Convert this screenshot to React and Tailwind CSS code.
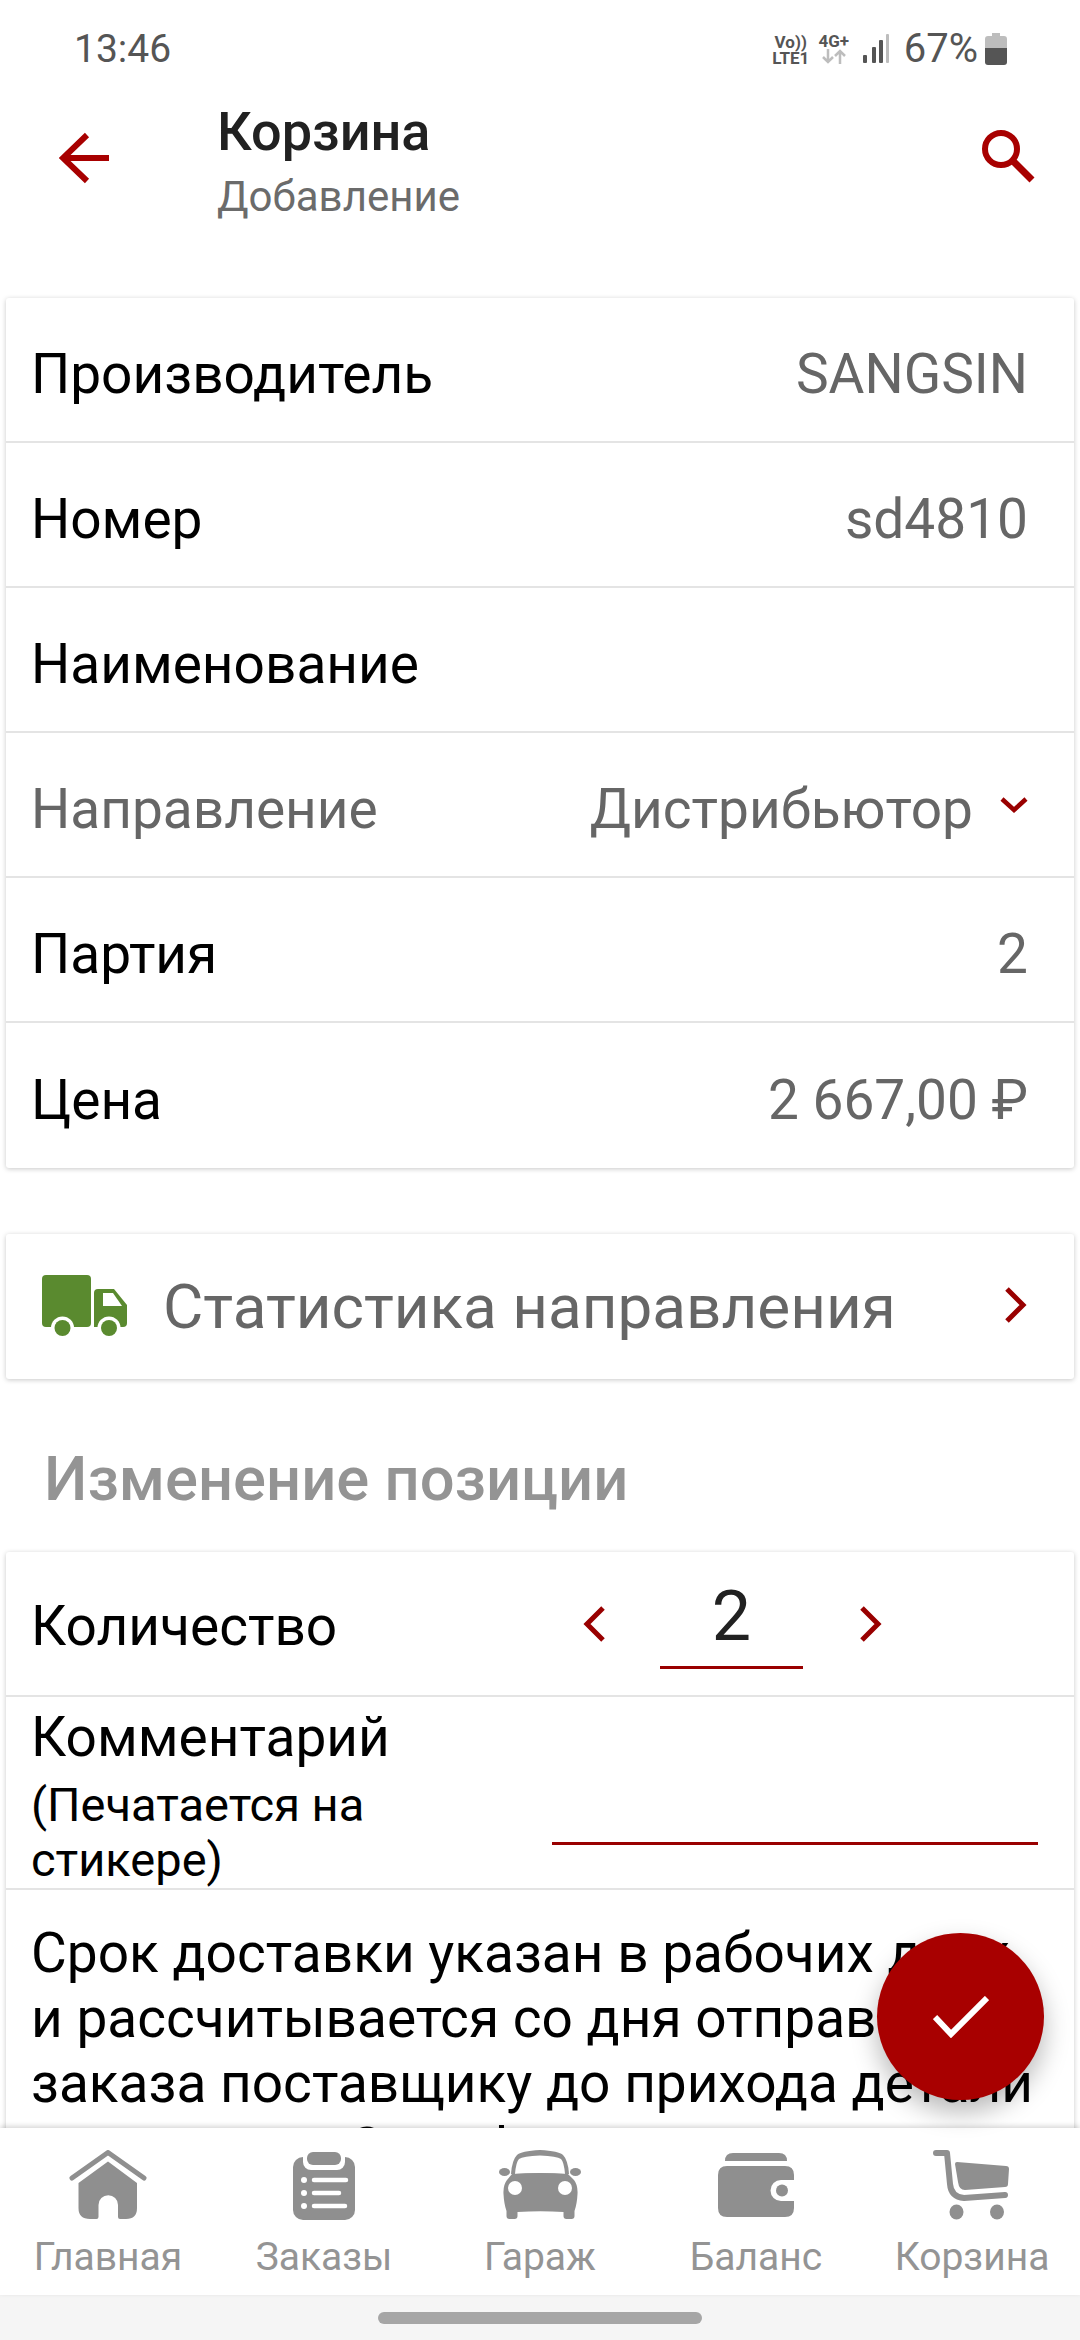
import React from 'react';

const RED = '#a80000';

function StatusBar() {
  return (
    <div className="h-[98px] flex items-center justify-between pl-[74px] pr-[73px] text-[#555555]">
      <span className="text-[39px] leading-none">13:46</span>
      <div className="flex items-center">
        {/* network labels */}
        <div className="flex flex-col items-center w-[40px] font-bold text-[#555555]">
          <span className="text-[17px] leading-[17px]">Vo))</span>
          <span className="text-[17px] leading-[14px]">LTE1</span>
        </div>
        <div className="flex flex-col items-center w-[34px] ml-[6px]">
          <span className="text-[17px] leading-[15px] font-bold">4G+</span>
          <svg width="26" height="15" viewBox="0 0 26 15" fill="none" stroke="#bdbdbd" strokeWidth="2.5">
            <path d="M7 0V13M2 8l5 5 5-5" />
            <path d="M19 15V2M14 7l5-5 5 5" />
          </svg>
        </div>
        <svg className="ml-[11px]" width="28" height="30" viewBox="0 0 28 30">
          <rect x="1" y="21" width="4" height="8" rx="1" fill="#555555" />
          <rect x="10" y="13" width="4" height="16" rx="1" fill="#555555" />
          <rect x="17" y="6" width="4" height="23" rx="1" fill="#555555" />
          <rect x="24" y="0" width="3" height="29" rx="1" fill="#bdbdbd" />
        </svg>
        <span className="text-[40px] leading-none ml-[14px]">67%</span>
        <svg className="ml-[7px]" width="22" height="32" viewBox="0 0 22 32">
          <path d="M7 0h8v3h4q3 0 3 3v9H0V6q0-3 3-3h4z" fill="#bdbdbd" />
          <path d="M0 15h22v14q0 3-3 3H3q-3 0-3-3z" fill="#555555" />
        </svg>
      </div>
    </div>
  );
}

function Header() {
  return (
    <div className="h-[192px] flex items-start">
      <svg className="ml-[59px] mt-[34px] shrink-0" width="52" height="52" viewBox="0 0 52 52" fill="none" stroke={RED} strokeWidth="6">
        <path d="M50 26H5M28 3L4 26l24 23" />
      </svg>
      <div className="ml-[106px] flex-1 pt-[4px]">
        <div className="text-[54px] leading-[60px] font-medium text-[#212121]">Корзина</div>
        <div className="text-[42px] leading-[50px] mt-[10px] text-[#6b6b6b]">Добавление</div>
      </div>
      <svg className="mr-[45px] mt-[31px] shrink-0" width="54" height="54" viewBox="0 0 54 54" fill="none" stroke={RED} strokeWidth="6">
        <circle cx="20" cy="20" r="16" />
        <path d="M31 31l20 20" strokeWidth="7" />
      </svg>
    </div>
  );
}

function Row({ label, value, muted, children }) {
  return (
    <div className="h-[145px] flex items-center justify-between pt-[9px] pl-[25px] pr-[46px] border-b-2 border-[#e4e4e4] last:border-b-0">
      <span className={`text-[55px] ${muted ? 'text-[#666666]' : 'text-black'}`}>{label}</span>
      <div className="flex items-center">
        <span className="text-[55px] text-[#666666]">{value}</span>
        {children}
      </div>
    </div>
  );
}

function Chevron({ dir = 'right', w = 24, h = 36, sw = 5 }) {
  const d = dir === 'right' ? 'M3 2l16 16L3 34' : 'M21 2L5 18l16 16';
  return (
    <svg width={w} height={h} viewBox="0 0 24 36" fill="none" stroke="#990000" strokeWidth={sw} preserveAspectRatio="none">
      <path d={d} />
    </svg>
  );
}

function Truck() {
  return (
    <svg width="110" height="85" viewBox="0 0 110 85" className="shrink-0">
      <rect x="12" y="10" width="49" height="52" rx="4" fill="#5a8a2f" />
      <path d="M64 28q0-4 4-4h16l13 16v18q0 4-4 4H64z" fill="#5a8a2f" />
      <path d="M73 28h10l9 13H73z" fill="#fff" />
      <circle cx="32.5" cy="63" r="11.5" fill="#fff" />
      <circle cx="32.5" cy="63" r="8" fill="#5a8a2f" />
      <circle cx="79" cy="63" r="11.5" fill="#fff" />
      <circle cx="79" cy="63" r="8" fill="#5a8a2f" />
    </svg>
  );
}

function HomeIcon() {
  return (
    <svg width="78" height="70" viewBox="0 0 78 70" fill="#8f8f8f">
      <path d="M3 28L39 2.5 75 28" fill="none" stroke="#8f8f8f" strokeWidth="5" strokeLinecap="round" strokeLinejoin="round" />
      <path d="M39 11.5L68 33v25q0 11-11 11h-6q-2 0-2-2V55a9.7 9.7 0 0 0-19.5 0v12q0 2-2 2H21Q9.5 69 9.5 58V33z" />
    </svg>
  );
}

function OrdersIcon() {
  return (
    <svg width="62" height="68" viewBox="0 0 62 68" fill="#8f8f8f">
      <rect x="0" y="5" width="62" height="63" rx="10" />
      <rect x="10" y="-4" width="42" height="22" rx="8" fill="#fff" />
      <rect x="14" y="0" width="34" height="13" rx="6" />
      <g fill="#fff">
        <circle cx="11" cy="28" r="3" />
        <circle cx="11" cy="41" r="3" />
        <circle cx="11" cy="54" r="3" />
      </g>
      <path d="M21 28h32M21 41h25M21 54h31" stroke="#fff" strokeWidth="4.5" strokeLinecap="round" />
    </svg>
  );
}

function CarIcon() {
  return (
    <svg width="100" height="70" viewBox="0 10 100 70" fill="#8f8f8f">
      <path d="M21 34q1-14 6-19 4-4 23-5 19 1 23 5 5 5 6 19z" />
      <path d="M25 34q1-12 4-15 4-3 21-3.5 17 .5 21 3.5 3 3 4 15-25-1.500-50 0z" fill="#fff" />
      <ellipse cx="14.500" cy="32" rx="5.500" ry="4" />
      <ellipse cx="85.500" cy="32" rx="5.500" ry="4" />
      <path d="M22 34q28-2 56 0l6 6q4 5 3.500 14-.5 10-3 17v5q0 3-3 3h-5q-3 0-3-3v-4q-23-1.500-46 0v4q0 3-3 3h-5q-3 0-3-3v-5q-2.500-7-3-17-.5-9 3.500-14z" />
      <circle cx="25" cy="48" r="7" fill="#fff" />
      <circle cx="75" cy="48" r="7" fill="#fff" />
    </svg>
  );
}

function WalletIcon() {
  return (
    <svg className="mb-[3px]" width="76" height="64" viewBox="0 0 76 64" fill="#8f8f8f">
      <path d="M7 8q0-8 8-8h46q8 0 8 8z" />
      <path d="M9 13h58q9 0 9 9v5H63a10.500 10.500 0 0 0 0 21h13v7q0 9-9 9H9q-9 0-9-9V22q0-9 9-9z" />
      <circle cx="64" cy="37.500" r="6" />
    </svg>
  );
}

function CartIcon() {
  return (
    <svg width="78" height="70" viewBox="0 0 78 70" fill="#8f8f8f">
      <path d="M3 3h11l3 31q1 13 14 14l41-3" fill="none" stroke="#8f8f8f" strokeWidth="6" strokeLinecap="round" strokeLinejoin="round" />
      <path d="M24 12l49 4q3 0 3 3l-1 15q0 3-3 3l-40 3q-6 0-7-8l-3-18q0-2 2-2z" />
      <ellipse cx="23.500" cy="62" rx="7" ry="7.500" />
      <ellipse cx="64" cy="62" rx="7" ry="7.500" />
    </svg>
  );
}

const tabs = [
  { label: 'Главная', icon: <HomeIcon /> },
  { label: 'Заказы', icon: <OrdersIcon /> },
  { label: 'Гараж', icon: <CarIcon /> },
  { label: 'Баланс', icon: <WalletIcon /> },
  { label: 'Корзина', icon: <CartIcon /> },
];

function TabBar() {
  return (
    <div className="relative z-10 h-[167px] grid grid-cols-5 bg-white shadow-[0_-2px_5px_rgba(0,0,0,0.16)]">
      {tabs.map((tab) => (
        <div key={tab.label} className="flex flex-col items-center">
          <div className="h-[92px] flex items-end justify-center">{tab.icon}</div>
          <span className="text-[39px] leading-[46px] mt-[14px] text-[#949494]">{tab.label}</span>
        </div>
      ))}
    </div>
  );
}

export default function App() {
  return (
    <div className="relative w-[1080px] h-[2340px] overflow-hidden bg-white flex flex-col font-['Roboto',sans-serif]">
      <StatusBar />
      <Header />

      <div className="flex-1 min-h-0 overflow-hidden px-[6px] pt-[8px]">
        {/* Position details */}
        <div className="bg-white rounded-[3px] shadow-[0_1px_5px_rgba(0,0,0,0.22)]">
          <Row label="Производитель" value="SANGSIN" />
          <Row label="Номер" value="sd4810" />
          <Row label="Наименование" value="" />
          <Row label="Направление" value="Дистрибьютор" muted>
            <svg className="ml-[27px] -mt-[8px]" width="28" height="18" viewBox="0 0 28 18" fill="none" stroke="#990000" strokeWidth="4.500">
              <path d="M2 3l12 11L26 3" />
            </svg>
          </Row>
          <Row label="Партия" value="2" />
          <Row label="Цена" value="2 667,00 ₽" />
        </div>

        {/* Direction statistics */}
        <div className="mt-[66px] h-[145px] flex items-center bg-white rounded-[3px] shadow-[0_1px_5px_rgba(0,0,0,0.22)]">
          <div className="ml-[24px] mt-[2px]"><Truck /></div>
          <span className="ml-[23px] flex-1 text-[62px] text-[#666666]">Статистика направления</span>
          <div className="mr-[46px] -mt-[4px]"><Chevron /></div>
        </div>

        <div className="mt-[65px] ml-[38px] text-[61.5px] leading-[70px] font-medium text-[#949494]">Изменение позиции</div>

        {/* Edit position */}
        <div className="mt-[38px] bg-white rounded-[3px] shadow-[0_1px_5px_rgba(0,0,0,0.22)]">
          <div className="h-[145px] flex items-center pl-[25px] border-b-2 border-[#e4e4e4]">
            <span className="w-[551px] pt-[6px] text-[55px] text-black">Количество</span>
            <Chevron dir="left" />
            <div className="ml-[54px] w-[143px] h-[91px] border-b-[3px] border-[#990000] text-center text-[70px] leading-[76px] text-[#212121]">2</div>
            <div className="ml-[56px]"><Chevron /></div>
          </div>
          <div className="h-[193px] flex pl-[25px] border-b-2 border-[#e4e4e4]">
            <div className="w-[400px] text-black pt-[8px]">
              <div className="text-[55px] leading-[64px]">Комментарий</div>
              <div className="text-[47px] leading-[55px] mt-[8px]">(Печатается на стикере)</div>
            </div>
            <div className="ml-[121px] w-[486px] h-[148px] border-b-[3px] border-[#990000]" />
          </div>
          <p className="pl-[25px] pr-[38px] pt-[31px] text-[55px] leading-[65px] text-black">
            Срок доставки указан в рабочих днях и рассчитывается со дня отправки заказа поставщику до прихода детали в магазине. Этот фактор
          </p>
        </div>
      </div>

      <TabBar />

      <div className="h-[45px] bg-[#f5f5f5] flex items-center justify-center">
        <div className="w-[324px] h-[12px] rounded-full bg-[#a6a6a6]" />
      </div>

      {/* Confirm button */}
      <button className="absolute z-20 left-[877px] top-[1933px] w-[167px] h-[167px] rounded-full bg-[#a80000] flex items-center justify-center shadow-[0_12px_26px_rgba(0,0,0,0.28)]">
        <svg width="56" height="42" viewBox="0 0 56 42" fill="none" stroke="#fff" strokeWidth="6">
          <path d="M2 21l16 17L54 2" />
        </svg>
      </button>
    </div>
  );
}
